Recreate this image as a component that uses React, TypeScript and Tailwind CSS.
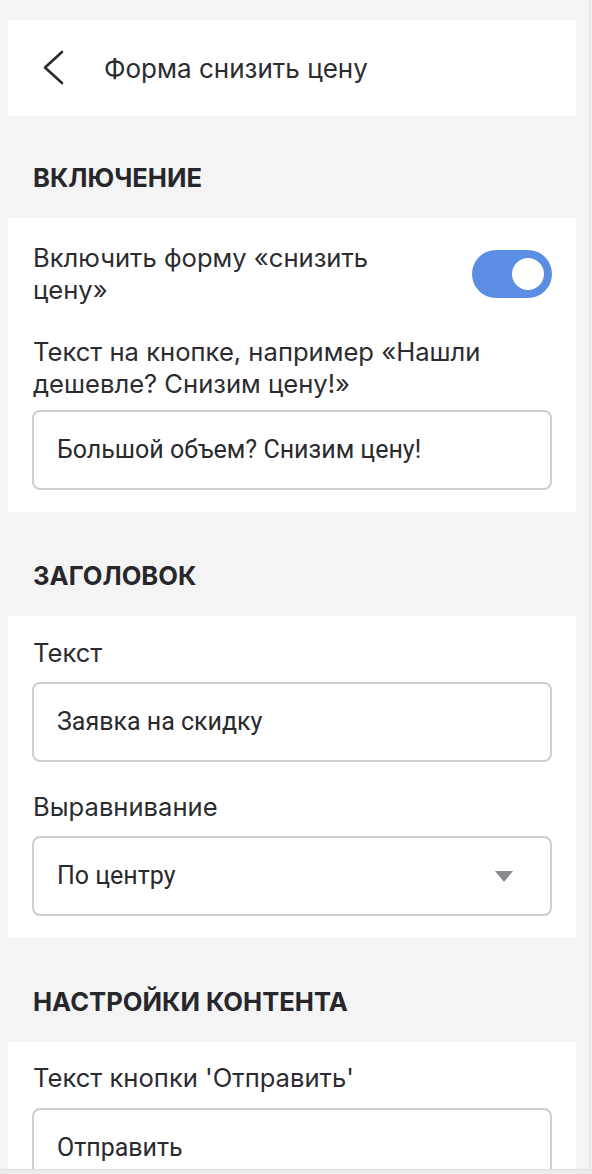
import React from 'react'

function Toggle() {
  return (
    <div className="relative h-12 w-20 shrink-0 rounded-full bg-[#5b8de3]">
      <div className="absolute right-2 top-2 h-8 w-8 rounded-full bg-white" />
    </div>
  )
}

function TextField({ value }: { value: string }) {
  return (
    <div className="flex h-20 items-center rounded-lg border-2 border-[#cfcfd3] bg-white px-[23px] font-['Roboto',sans-serif] text-[25px] text-[#2a2a2e]">
      {value}
    </div>
  )
}

function SelectField({ value }: { value: string }) {
  return (
    <div className="flex h-20 items-center justify-between rounded-lg border-2 border-[#cfcfd3] bg-white pl-[23px] pr-[37px] font-['Roboto',sans-serif] text-[25px] text-[#2a2a2e]">
      <span>{value}</span>
      <svg width="18" height="11" viewBox="0 0 18 11">
        <path d="M0 0 H18 L9 11 Z" fill="#8a8a8f" />
      </svg>
    </div>
  )
}

function SectionTitle({ children, top = 'pt-12' }: { children: React.ReactNode; top?: string }) {
  return (
    <div className={`${top} pb-6 pl-[25px]`}>
      <h2 className="text-[25.6px] font-bold uppercase leading-8 text-[#27272b]">{children}</h2>
    </div>
  )
}

function Label({ children }: { children: React.ReactNode }) {
  return <div className="text-[25.6px] leading-8 text-[#2c2c30]">{children}</div>
}

export default function App() {
  return (
    <div className="flex h-[1174px] flex-col overflow-hidden bg-[#f4f4f5] font-['Inter',sans-serif]">
      <div className="flex flex-1 overflow-hidden">
        <div className="w-[590px] border-r border-[#e2e2e4] pt-5 pl-2">
          {/* header */}
          <div className="flex h-24 w-[568px] items-center bg-white">
            <svg width="24" height="36" viewBox="0 0 24 36" className="ml-[34px]">
              <path d="M20 2 L3 17.5 L20 33" fill="none" stroke="#2a2a2e" strokeWidth="2.6" strokeLinecap="round" strokeLinejoin="round" />
            </svg>
            <span className="ml-[38px] text-[26px] text-[#2c2c30]">Форма снизить цену</span>
          </div>

          <SectionTitle top="pt-[46px]">Включение</SectionTitle>
          <div className="w-[568px] bg-white px-6 pt-6 pb-[22px]">
            <div className="flex items-center justify-between">
              <div className="max-w-[390px] pl-px">
                <Label>Включить форму «снизить цену»</Label>
              </div>
              <Toggle />
            </div>
            <div className="mt-[30px] mb-[10px] pl-px">
              <Label>Текст на кнопке, например «Нашли дешевле? Снизим цену!»</Label>
            </div>
            <TextField value="Большой объем? Снизим цену!" />
          </div>

          <SectionTitle>Заголовок</SectionTitle>
          <div className="w-[568px] bg-white px-6 pt-[21px] pb-[22px]">
            <div className="mb-[13px] pl-px">
              <Label>Текст</Label>
            </div>
            <TextField value="Заявка на скидку" />
            <div className="mt-[29px] mb-[13px] pl-px">
              <Label>Выравнивание</Label>
            </div>
            <SelectField value="По центру" />
          </div>

          <SectionTitle>Настройки контента</SectionTitle>
          <div className="w-[568px] bg-white px-6 pt-5 pb-[22px]">
            <div className="mb-[14px] pl-px">
              <Label>Текст кнопки 'Отправить'</Label>
            </div>
            <TextField value="Отправить" />
          </div>
        </div>
        <div className="flex-1 bg-[#f1f1f3]" />
      </div>
      <div className="h-[5px] shrink-0 border-t border-[#dcdcde] bg-[#ebebed]" />
    </div>
  )
}
